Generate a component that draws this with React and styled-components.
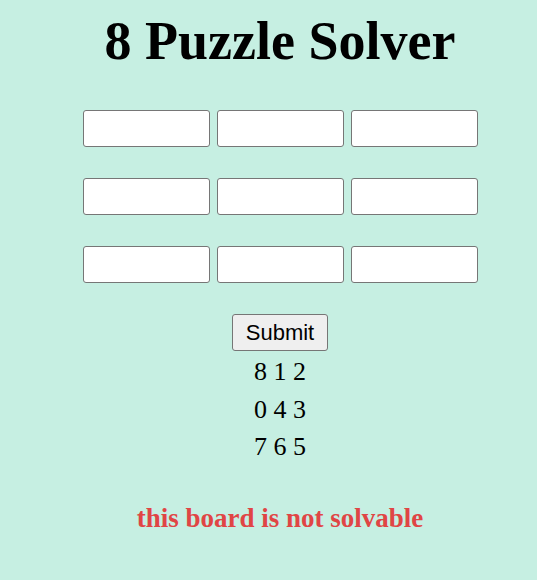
import React from "react";
import styled, { createGlobalStyle } from "styled-components";

const board = [
  [8, 1, 2],
  [0, 4, 3],
  [7, 6, 5],
];

const GlobalStyle = createGlobalStyle`
  html, body {
    margin: 0;
    background: #c6efe2;
    font-family: "Liberation Serif", "Times New Roman", serif;
  }
`;

const Page = styled.div`
  width: 544px;
  padding: 10px 0 40px 8px;
  display: flex;
  flex-direction: column;
  align-items: center;
  color: #000;
`;

const Title = styled.h1`
  margin: 0;
  font-size: 54px;
  line-height: 62px;
  font-weight: bold;
`;

const Grid = styled.div`
  margin-top: 38px;
  display: grid;
  grid-template-columns: repeat(3, 127px);
  column-gap: 7px;
  row-gap: 31px;
`;

const Cell = styled.input`
  box-sizing: border-box;
  width: 127px;
  height: 37px;
  margin: 0;
  border: 1px solid #767676;
  border-radius: 3px;
  background: #fff;
  font-size: 16px;
`;

const SubmitButton = styled.button`
  margin-top: 31px;
  box-sizing: border-box;
  height: 37px;
  padding: 0 13px;
  border: 1px solid #767676;
  border-radius: 3px;
  background: #efefef;
  color: #000;
  font-family: "Liberation Sans", Arial, sans-serif;
  font-size: 22px;
`;

const BoardRow = styled.div`
  font-size: 26px;
  line-height: 37.5px;
  margin-top: ${(p) => (p.$first ? "2px" : "0")};
`;

const Message = styled.h3`
  margin: 37px 0 0;
  font-size: 27px;
  line-height: 31px;
  font-weight: bold;
  color: #e04545;
`;

export default function App() {
  return (
    <>
      <GlobalStyle />
      <Page>
        <Title>8 Puzzle Solver</Title>
        <Grid>
          {Array.from({ length: 9 }).map((_, i) => (
            <Cell key={i} type="text" />
          ))}
        </Grid>
        <SubmitButton>Submit</SubmitButton>
        {board.map((row, i) => (
          <BoardRow key={i} $first={i === 0}>
            {row.join(" ")}
          </BoardRow>
        ))}
        <Message>this board is not solvable</Message>
      </Page>
    </>
  );
}
